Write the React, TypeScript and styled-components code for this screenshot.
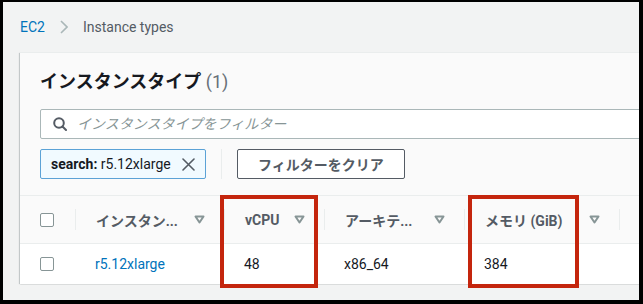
import React from "react";
import styled, { createGlobalStyle } from "styled-components";

const GlobalStyle = createGlobalStyle`
  html, body {
    margin: 0;
    padding: 0;
    background: #000;
  }
  * {
    box-sizing: border-box;
  }
`;

const FONT = `Roboto, "Noto Sans CJK JP", sans-serif`;

interface Column {
  key: string;
  title: string;
}

// header labels as they appear truncated in the narrow columns
const columns: Column[] = [
  { key: "name", title: "インスタン..." },
  { key: "vcpu", title: "vCPU" },
  { key: "arch", title: "アーキテ..." },
  { key: "memory", title: "メモリ (GiB)" },
];

const row = {
  name: "r5.12xlarge",
  vcpu: "48",
  arch: "x86_64",
  memory: "384",
};

const SortIcon = () => (
  <svg width="11" height="9" viewBox="0 0 11 9">
    <polygon
      points="1.5,1.5 9.5,1.5 5.5,7.5"
      fill="none"
      stroke="#879596"
      strokeWidth="2"
      strokeLinejoin="round"
    />
  </svg>
);

const SearchIcon = () => (
  <svg width="14" height="14" viewBox="0 0 14 14">
    <circle cx="6" cy="6" r="4.8" fill="none" stroke="#545b64" strokeWidth="2" />
    <line x1="9.5" y1="9.5" x2="13" y2="13" stroke="#545b64" strokeWidth="2" strokeLinecap="round" />
  </svg>
);

const CloseIcon = () => (
  <svg width="13" height="13" viewBox="0 0 13 13">
    <path d="M1 1 L12 12 M12 1 L1 12" stroke="#545b64" strokeWidth="1.6" strokeLinecap="round" />
  </svg>
);

const Chevron = () => (
  <svg width="8" height="14" viewBox="0 0 8 14">
    <path d="M1 1 L7 7 L1 13" fill="none" stroke="#aab7b8" strokeWidth="1.6" />
  </svg>
);

export default function App() {
  return (
    <>
      <GlobalStyle />
      <Frame>
        <Breadcrumbs>
          <Crumb $link>EC2</Crumb>
          <Chevron />
          <Crumb>Instance types</Crumb>
        </Breadcrumbs>

        <Card>
          <CardHeader>
            <Title>
              インスタンスタイプ <Count>(1)</Count>
            </Title>
            <SearchBox>
              <SearchIcon />
              <SearchInput placeholder="インスタンスタイプをフィルター" />
            </SearchBox>
            <TokenRow>
              <Token>
                <TokenText>
                  <b>search:</b> r5.12xlarge
                </TokenText>
                <CloseIcon />
              </Token>
              <VDivider />
              <Button>フィルターをクリア</Button>
            </TokenRow>
          </CardHeader>

          <TableWrap>
            <Grid>
              <HeadCell $first>
                <Checkbox />
              </HeadCell>
              {columns.map((c) => (
                <HeadCell key={c.key}>
                  <HeadLabel>{c.title}</HeadLabel>
                  <SortIcon />
                </HeadCell>
              ))}
              <HeadCell />

              <BodyCell>
                <Checkbox />
              </BodyCell>
              <BodyCell>
                <Link>{row.name}</Link>
              </BodyCell>
              <BodyCell>{row.vcpu}</BodyCell>
              <BodyCell>{row.arch}</BodyCell>
              <BodyCell>{row.memory}</BodyCell>
              <BodyCell />
            </Grid>

            <Highlight style={{ left: 200, width: 98 }} />
            <Highlight style={{ left: 448, width: 111 }} />
          </TableWrap>
        </Card>
      </Frame>
    </>
  );
}

const Frame = styled.div`
  margin: 2px 4px 4px 3px;
  height: 298px;
  background: #f2f3f3;
  overflow: hidden;
  padding: 15px 0 0 17px;
  font-family: ${FONT};
`;

const Breadcrumbs = styled.div`
  display: flex;
  align-items: center;
  gap: 15px;
  height: 20px;
  font-size: 14px;
`;

const Crumb = styled.span<{ $link?: boolean }>`
  color: ${(p) => (p.$link ? "#0073bb" : "#545b64")};
  line-height: 20px;
`;

const Card = styled.div`
  margin-top: 15px;
  width: 700px;
  height: 231px;
  background: #fafafa;
  box-shadow: 0 1px 1px 0 rgba(0, 28, 36, 0.3), 1px 1px 1px 0 rgba(0, 28, 36, 0.15),
    -1px 1px 1px 0 rgba(0, 28, 36, 0.15);
  border-top: 1px solid #eaeded;
  display: flex;
  flex-direction: column;
`;

const CardHeader = styled.div`
  padding: 18px 20px 16px 20px;
  display: flex;
  flex-direction: column;
`;

const Title = styled.h2`
  margin: 0;
  font-size: 18px;
  line-height: 22px;
  font-weight: 700;
  color: #16191f;
`;

const Count = styled.span`
  font-weight: 400;
  color: #687078;
`;

const SearchBox = styled.label`
  margin-top: 16px;
  height: 30px;
  display: flex;
  align-items: center;
  gap: 10px;
  padding-left: 12px;
  background: #fff;
  border: 1px solid #aab7b8;
  border-radius: 2px;
`;

const SearchInput = styled.input`
  flex: 1;
  border: none;
  outline: none;
  background: transparent;
  font-family: ${FONT};
  font-size: 14px;
  padding: 0;

  &::placeholder {
    color: #879596;
    font-style: italic;
  }
`;

const TokenRow = styled.div`
  margin-top: 10px;
  display: flex;
  align-items: center;
`;

const Token = styled.div`
  height: 30px;
  width: 166px;
  display: flex;
  align-items: center;
  justify-content: space-between;
  padding: 0 10px;
  background: #f1faff;
  border: 1px solid #5ba2d6;
  border-radius: 2px;
`;

const TokenText = styled.span`
  font-size: 14px;
  color: #16191f;

  b {
    font-weight: 700;
  }
`;

const VDivider = styled.div`
  width: 1px;
  height: 30px;
  background: #eaeded;
  margin: 0 15px;
`;

const Button = styled.button`
  height: 30px;
  padding: 0 20px;
  background: #fff;
  border: 1px solid #545b64;
  border-radius: 2px;
  font-family: ${FONT};
  font-size: 14px;
  font-weight: 700;
  color: #545b64;
`;

const TableWrap = styled.div`
  position: relative;
`;

const Grid = styled.div`
  display: grid;
  grid-template-columns: 55px 149px 100px 140px 155px 1fr;
  grid-template-rows: 49px 40px;
  font-size: 14px;
`;

const HeadCell = styled.div<{ $first?: boolean }>`
  position: relative;
  display: flex;
  align-items: center;
  justify-content: space-between;
  gap: 8px;
  padding: ${(p) => (p.$first ? "0 0 0 20px" : "0 19px 0 21px")};
  border-top: 1px solid #eaeded;
  border-bottom: 1px solid #eaeded;
  background: #fafafa;
  font-weight: 700;
  color: #545b64;

  &::before {
    content: "";
    display: ${(p) => (p.$first ? "none" : "block")};
    position: absolute;
    left: 0;
    top: 13px;
    bottom: 13px;
    width: 1px;
    background: #eaeded;
  }
`;

const HeadLabel = styled.span`
  white-space: nowrap;
`;

const BodyCell = styled.div`
  display: flex;
  align-items: center;
  padding-left: 20px;
  background: #fff;
  color: #16191f;
`;

const Checkbox = styled.span`
  display: block;
  width: 14px;
  height: 14px;
  border: 1.5px solid #879596;
  border-radius: 2px;
  background: #fff;
`;

const Link = styled.a`
  color: #0073bb;
  text-decoration: none;
`;

const Highlight = styled.div`
  position: absolute;
  top: 0;
  height: 93px;
  border: 4px solid #c4250d;
  pointer-events: none;
`;
